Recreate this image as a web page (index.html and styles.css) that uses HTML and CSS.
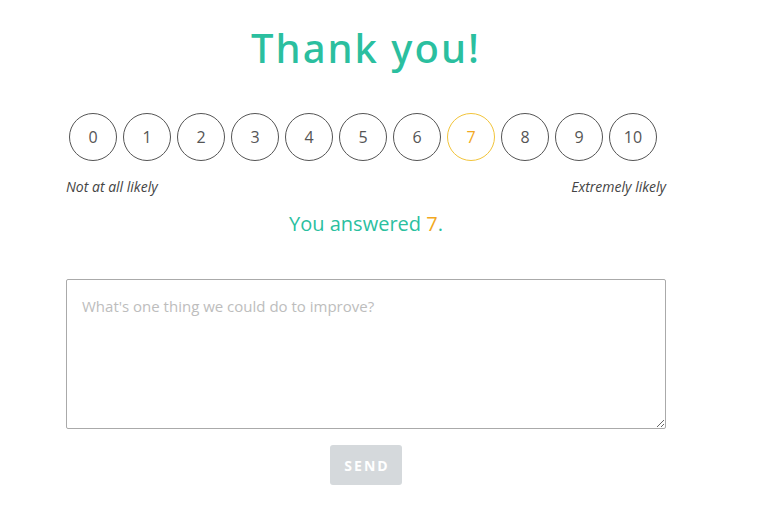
FILE: index.html
```html
<!DOCTYPE html>
<html lang="en">
<head>
<meta charset="UTF-8">
<meta name="viewport" content="width=device-width, initial-scale=1.0">
<title>Thank you</title>
<link rel="stylesheet" href="styles.css">
</head>
<body>
    <div class="survey">
        <h1>Thank you!</h1>

        <!-- score scale -->
        <div class="scale">
            <span class="score">0</span>
            <span class="score">1</span>
            <span class="score">2</span>
            <span class="score">3</span>
            <span class="score">4</span>
            <span class="score">5</span>
            <span class="score">6</span>
            <span class="score selected">7</span>
            <span class="score">8</span>
            <span class="score">9</span>
            <span class="score">10</span>
        </div>
        <div class="labels">
            <span>Not at all likely</span>
            <span>Extremely likely</span>
        </div>

        <p class="answer">You answered <span class="num">7</span>.</p>

        <textarea class="feedback" placeholder="What's one thing we could do to improve?"></textarea>
        <div class="actions">
            <button class="send" disabled>SEND</button>
        </div>
    </div>
</body>
</html>
```

FILE: styles.css
```css
body {
    margin: 0;
    background: #fff;
    font-family: "Open Sans", "Liberation Sans", sans-serif;
}
.survey {
    width: 600px;
    margin-left: 66px;
    display: flex;
    flex-direction: column;
}
h1 {
    margin: 24px 0 0;
    height: 48px;
    text-align: center;
    color: #2bbf9f;
    font-family: "Noto Sans", sans-serif;
    font-weight: 500;
    font-size: 40px;
    line-height: 48px;
    letter-spacing: 2px;
}
.scale {
    display: flex;
    margin-top: 41px;
}
.score {
    width: 46px;
    height: 46px;
    margin: 0 3px;
    border: 1px solid #555;
    border-radius: 50%;
    display: flex;
    align-items: center;
    justify-content: center;
    color: #555;
    font-size: 16px;
}
.score.selected {
    border-color: #f2c43a;
    color: #f2a821;
}
.labels {
    display: flex;
    justify-content: space-between;
    margin-top: 17px;
    font-size: 14px;
    font-style: italic;
    color: #444;
    line-height: 18px;
}
.answer {
    margin: 14px 0 0;
    text-align: center;
    color: #2bbf9f;
    font-size: 20px;
    line-height: 28px;
}
.answer .num {
    color: #f2a821;
}
.feedback {
    box-sizing: border-box;
    width: 600px;
    height: 150px;
    margin-top: 41px;
    padding: 16px 15px;
    border: 1px solid #aaa;
    border-radius: 2px;
    font-family: "Open Sans", "Liberation Sans", sans-serif;
    font-size: 15px;
    line-height: 20px;
    color: #333;
    resize: vertical;
}
.feedback::placeholder {
    color: #bdbdbd;
}
.actions {
    display: flex;
    justify-content: center;
    margin-top: 16px;
}
.send {
    width: 72px;
    height: 40px;
    border: none;
    border-radius: 3px;
    background: #d5d9dc;
    color: #fff;
    font-family: "Open Sans", "Liberation Sans", sans-serif;
    font-weight: bold;
    font-size: 14px;
    letter-spacing: 2px;
    padding: 0 0 0 2px;
}
```
